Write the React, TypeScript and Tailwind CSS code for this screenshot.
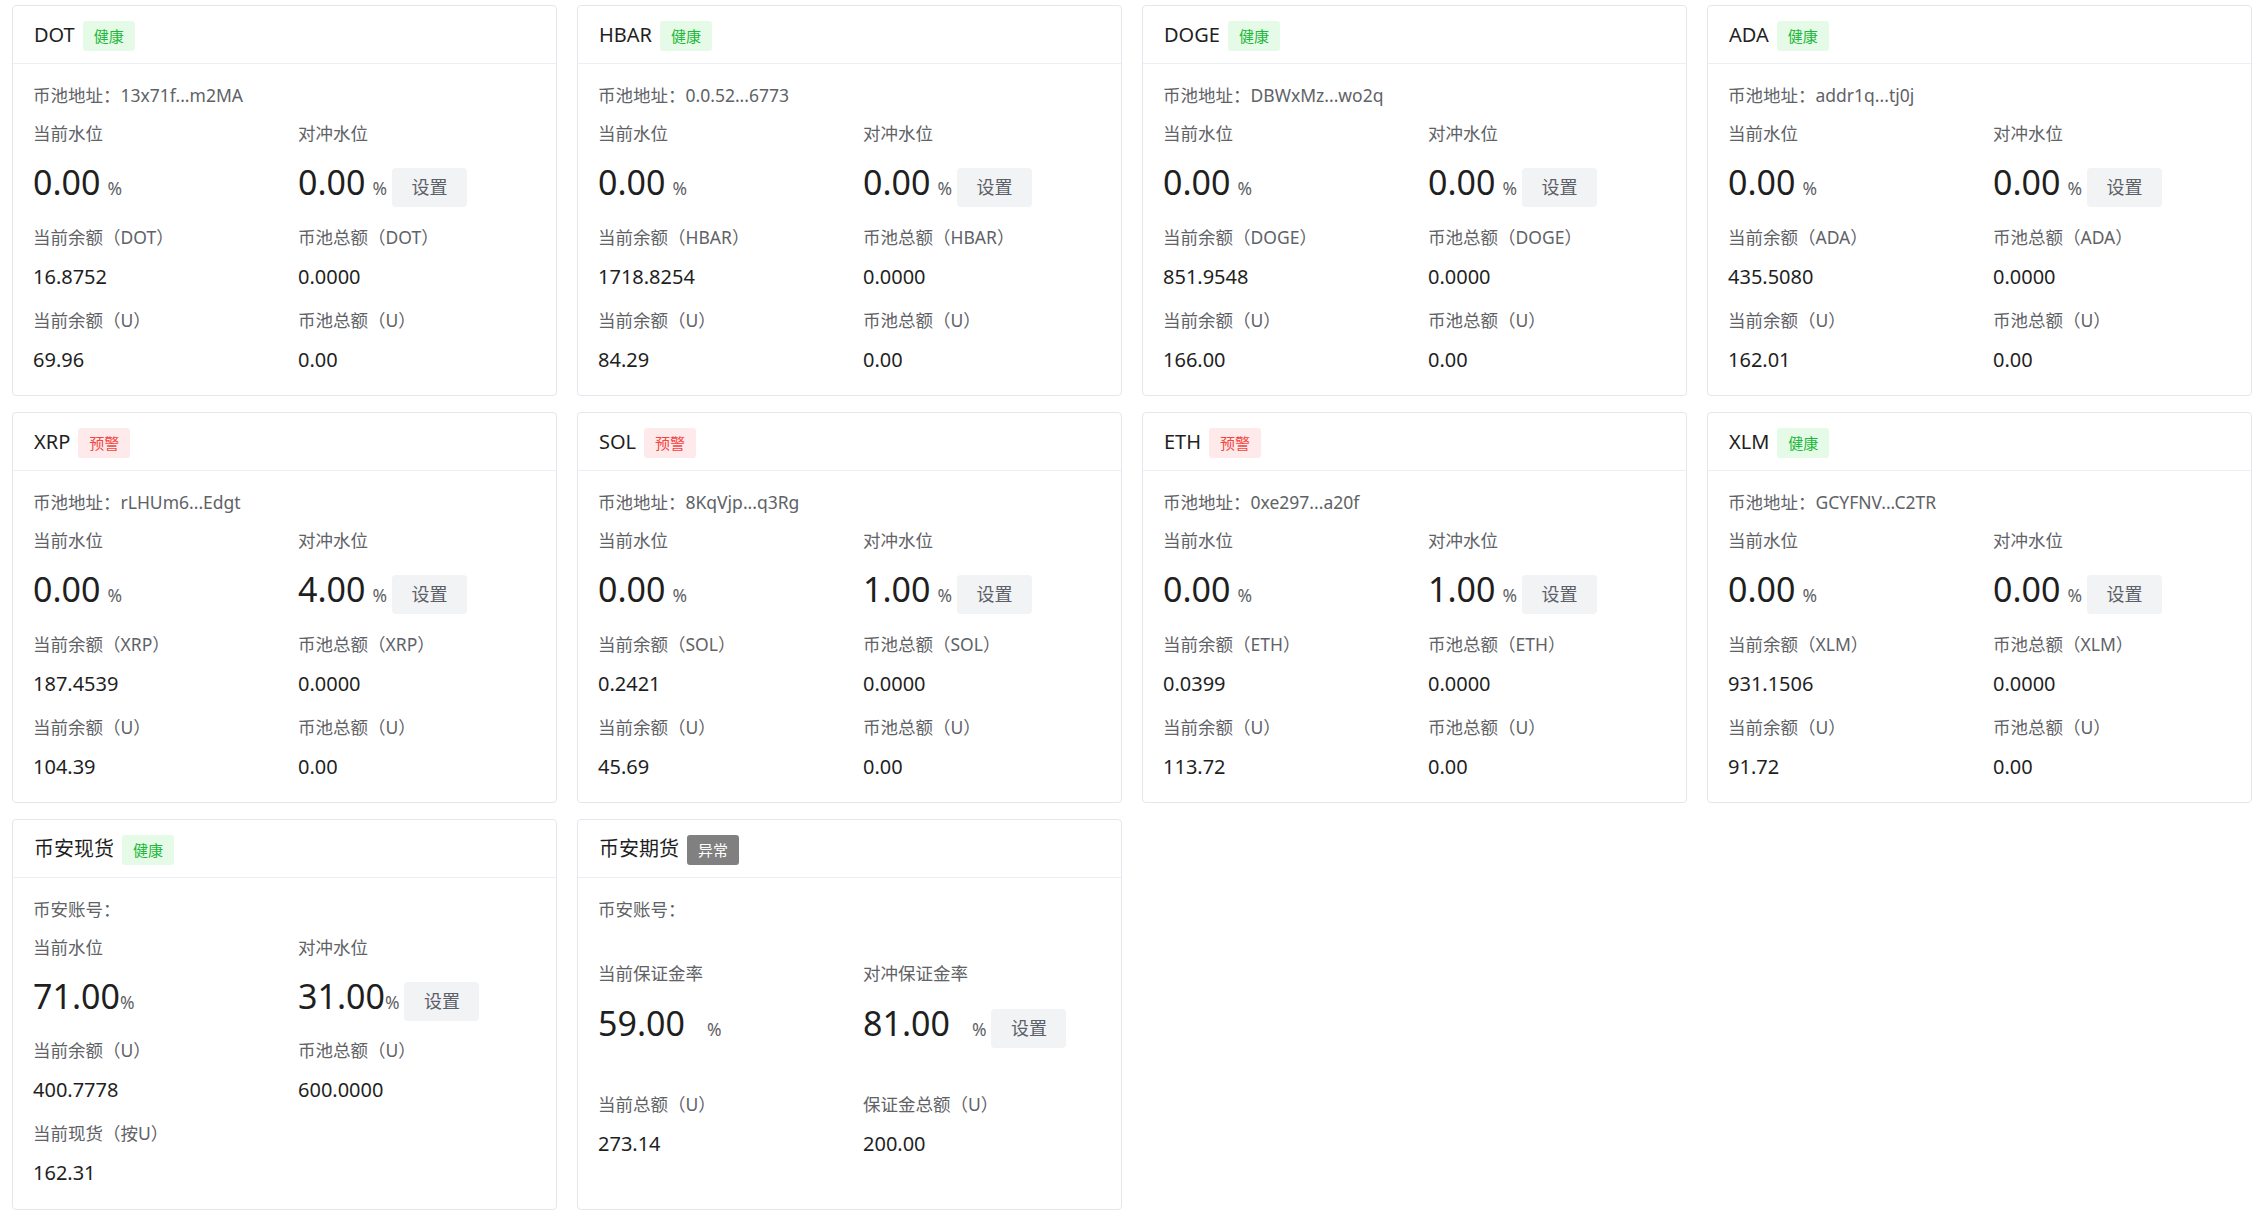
import type { ReactNode } from 'react';

// Pool / account monitor grid. Every card is 545 x 391, four to a row.

type Status = 'ok' | 'warn' | 'error';

interface Pool {
  name: string;
  status: Status;
  addr: string;
  cur: string;
  hedge: string;
  bal: string;
  total: string;
  balU: string;
  totalU: string;
}

const pools: Pool[] = [
  { name: 'DOT', status: 'ok', addr: '13x71f...m2MA', cur: '0.00', hedge: '0.00', bal: '16.8752', total: '0.0000', balU: '69.96', totalU: '0.00' },
  { name: 'HBAR', status: 'ok', addr: '0.0.52...6773', cur: '0.00', hedge: '0.00', bal: '1718.8254', total: '0.0000', balU: '84.29', totalU: '0.00' },
  { name: 'DOGE', status: 'ok', addr: 'DBWxMz...wo2q', cur: '0.00', hedge: '0.00', bal: '851.9548', total: '0.0000', balU: '166.00', totalU: '0.00' },
  { name: 'ADA', status: 'ok', addr: 'addr1q...tj0j', cur: '0.00', hedge: '0.00', bal: '435.5080', total: '0.0000', balU: '162.01', totalU: '0.00' },
  { name: 'XRP', status: 'warn', addr: 'rLHUm6...Edgt', cur: '0.00', hedge: '4.00', bal: '187.4539', total: '0.0000', balU: '104.39', totalU: '0.00' },
  { name: 'SOL', status: 'warn', addr: '8KqVjp...q3Rg', cur: '0.00', hedge: '1.00', bal: '0.2421', total: '0.0000', balU: '45.69', totalU: '0.00' },
  { name: 'ETH', status: 'warn', addr: '0xe297...a20f', cur: '0.00', hedge: '1.00', bal: '0.0399', total: '0.0000', balU: '113.72', totalU: '0.00' },
  { name: 'XLM', status: 'ok', addr: 'GCYFNV...C2TR', cur: '0.00', hedge: '0.00', bal: '931.1506', total: '0.0000', balU: '91.72', totalU: '0.00' },
];

function Tag({ status }: { status: Status }) {
  if (status === 'warn')
    return <span className="mt-[3px] h-[30px] rounded-[3px] bg-[#feeaea] px-[11px] text-[15px] leading-[30px] text-[#f5453f]">预警</span>;
  if (status === 'error')
    return <span className="mt-[3px] h-[30px] rounded-[3px] bg-[#808080] px-[11px] text-[15px] leading-[30px] text-white">异常</span>;
  return <span className="mt-[3px] h-[30px] rounded-[3px] bg-[#e6fbe7] px-[11px] text-[15px] leading-[30px] text-[#1cb83a]">健康</span>;
}

function Card({ title, status, children }: { title: string; status: Status; children: ReactNode }) {
  return (
    <div className="h-[391px] rounded-[4px] border border-[#e4e7ed] bg-white">
      <div className="flex h-[58px] items-center gap-2 border-b border-[#ebeef5] px-[21px]">
        <span className="text-[20px] text-[#1f1f1f]">{title}</span>
        <Tag status={status} />
      </div>
      <div className="px-[20px] pt-[19px]">{children}</div>
    </div>
  );
}

function Label({ children }: { children: ReactNode }) {
  return <div className="text-[17.5px] leading-[24px] text-[#606266]">{children}</div>;
}

function Value({ children }: { children: ReactNode }) {
  return <div className="mt-[16px] text-[20px] leading-[24px] text-[#1f1f1f]">{children}</div>;
}

function SetButton() {
  return (
    <button className="ml-[5px] mt-[6px] flex h-[39px] w-[75px] items-center justify-center rounded-[4px] bg-[#f2f3f5] text-[18px] text-[#5c6068]">
      设置
    </button>
  );
}

function Level({ value, tight, wide }: { value: string; tight?: boolean; wide?: boolean }) {
  return (
    <div className="flex items-baseline">
      <span className="text-[34px] leading-[40px] text-[#1f1f1f]">{value}</span>
      <span className={tight ? 'text-[17.5px] text-[#606266]' : wide ? 'ml-[22px] text-[17.5px] text-[#606266]' : 'ml-[7px] text-[17.5px] text-[#606266]'}>
        %
      </span>
    </div>
  );
}

function PoolCard({ p }: { p: Pool }) {
  return (
    <Card title={p.name} status={p.status}>
      <Label>币池地址：{p.addr}</Label>
      <div className="mt-[14px] grid grid-cols-[265px_1fr]">
        <div>
          <Label>当前水位</Label>
          <div className="mt-[17px] flex items-start">
            <Level value={p.cur} />
          </div>
        </div>
        <div>
          <Label>对冲水位</Label>
          <div className="mt-[17px] flex items-start">
            <Level value={p.hedge} />
            <SetButton />
          </div>
        </div>
      </div>
      <div className="mt-[18px] grid grid-cols-[265px_1fr]">
        <div>
          <Label>当前余额（{p.name}）</Label>
          <Value>{p.bal}</Value>
        </div>
        <div>
          <Label>币池总额（{p.name}）</Label>
          <Value>{p.total}</Value>
        </div>
      </div>
      <div className="mt-[19px] grid grid-cols-[265px_1fr]">
        <div>
          <Label>当前余额（U）</Label>
          <Value>{p.balU}</Value>
        </div>
        <div>
          <Label>币池总额（U）</Label>
          <Value>{p.totalU}</Value>
        </div>
      </div>
    </Card>
  );
}

function SpotCard() {
  return (
    <Card title="币安现货" status="ok">
      <Label>币安账号：</Label>
      <div className="mt-[14px] grid grid-cols-[265px_1fr]">
        <div>
          <Label>当前水位</Label>
          <div className="mt-[17px] flex items-start">
            <Level value="71.00" tight />
          </div>
        </div>
        <div>
          <Label>对冲水位</Label>
          <div className="mt-[17px] flex items-start">
            <Level value="31.00" tight />
            <SetButton />
          </div>
        </div>
      </div>
      <div className="mt-[17px] grid grid-cols-[265px_1fr]">
        <div>
          <Label>当前余额（U）</Label>
          <Value>400.7778</Value>
        </div>
        <div>
          <Label>币池总额（U）</Label>
          <Value>600.0000</Value>
        </div>
      </div>
      <div className="mt-[19px]">
        <Label>当前现货（按U）</Label>
        <Value>162.31</Value>
      </div>
    </Card>
  );
}

function FuturesCard() {
  return (
    <Card title="币安期货" status="error">
      <Label>币安账号：</Label>
      <div className="mt-[40px] grid grid-cols-[265px_1fr]">
        <div>
          <Label>当前保证金率</Label>
          <div className="mt-[18px] flex items-start">
            <Level value="59.00" wide />
          </div>
        </div>
        <div>
          <Label>对冲保证金率</Label>
          <div className="mt-[18px] flex items-start">
            <Level value="81.00" wide />
            <SetButton />
          </div>
        </div>
      </div>
      <div className="mt-[44px] grid grid-cols-[265px_1fr]">
        <div>
          <Label>当前总额（U）</Label>
          <div className="mt-[16px] text-[20px] leading-[24px] text-[#1f1f1f]">273.14</div>
        </div>
        <div>
          <Label>保证金总额（U）</Label>
          <div className="mt-[16px] text-[20px] leading-[24px] text-[#1f1f1f]">200.00</div>
        </div>
      </div>
    </Card>
  );
}

export default function App() {
  return (
    <div className="min-h-screen bg-white pl-[12px] pt-[5px] font-['Noto_Sans','Noto_Sans_CJK_SC',sans-serif]">
      <div className="grid grid-cols-[repeat(4,545px)] gap-x-[20px] gap-y-[16px]">
        {pools.map((p) => (
          <PoolCard key={p.name} p={p} />
        ))}
        <SpotCard />
        <FuturesCard />
      </div>
    </div>
  );
}
